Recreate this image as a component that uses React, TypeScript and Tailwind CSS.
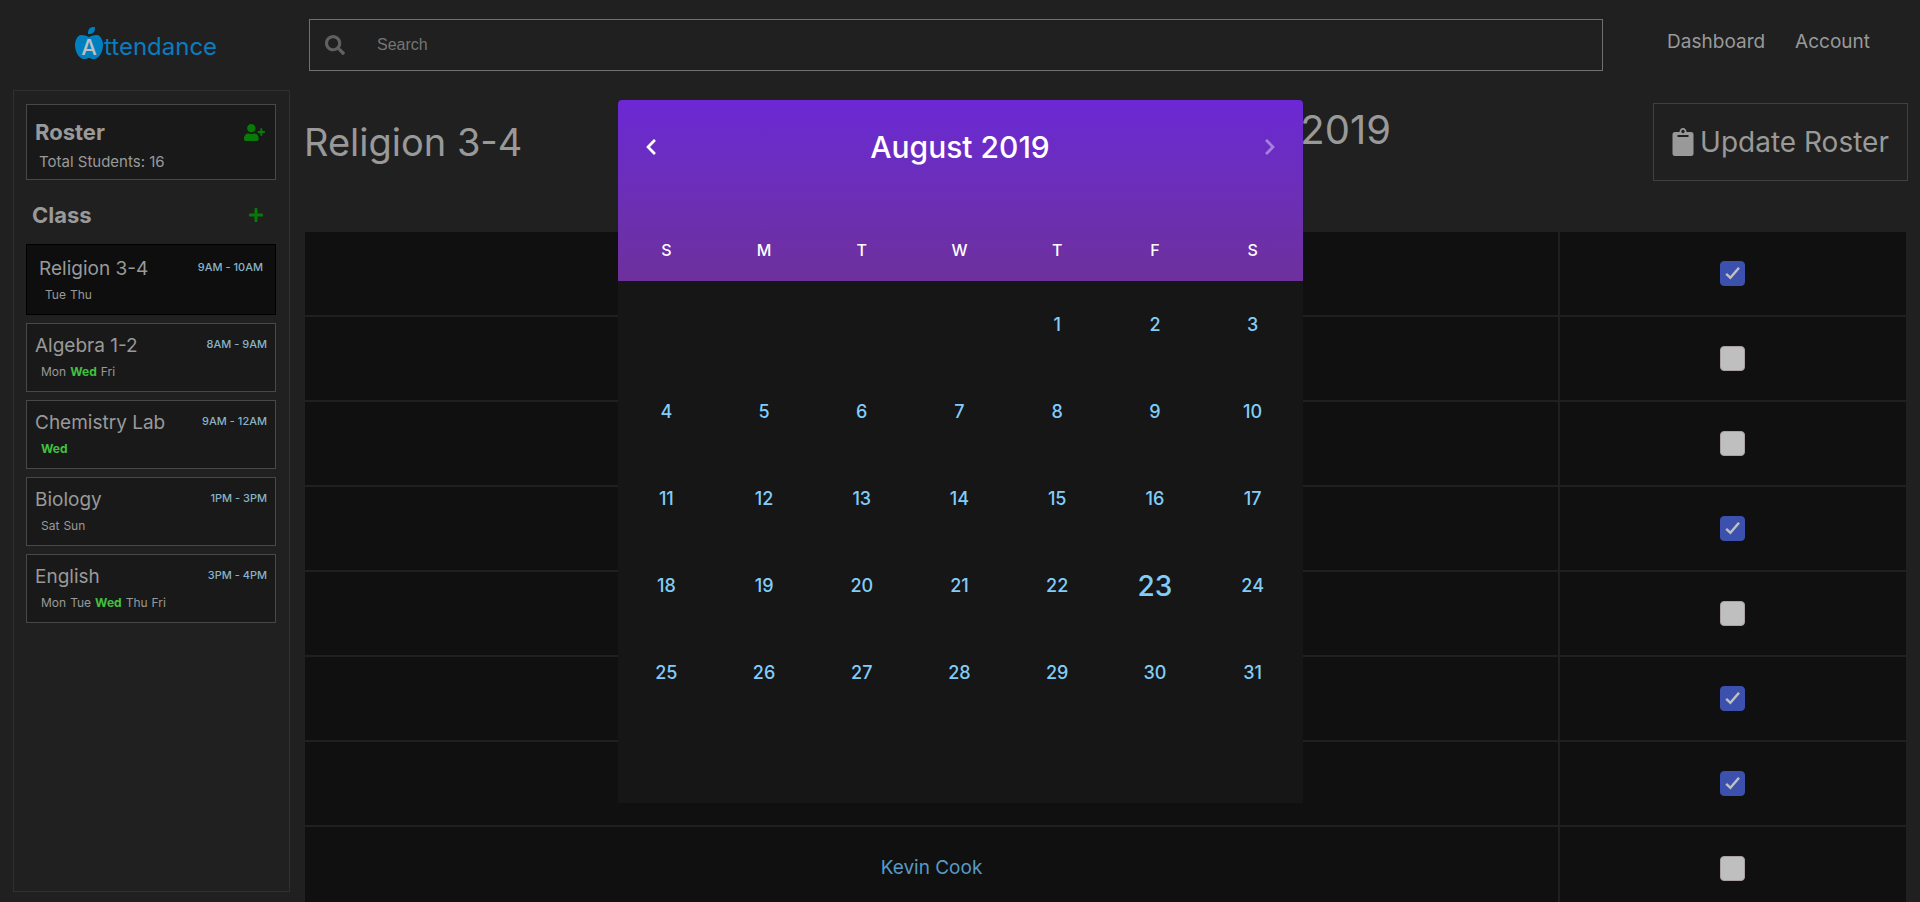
import { FaSearch, FaUserPlus, FaPlus, FaAppleAlt, FaChevronLeft, FaChevronRight } from "react-icons/fa";
import { useState } from "react";

type ClassItem = { name: string; time: string; days: string[]; active?: boolean };

const classes: ClassItem[] = [
  { name: "Religion 3-4", time: "9AM - 10AM", days: ["Tue", "Thu"], active: true },
  { name: "Algebra 1-2", time: "8AM - 9AM", days: ["Mon", "Wed", "Fri"] },
  { name: "Chemistry Lab", time: "9AM - 12AM", days: ["Wed"] },
  { name: "Biology", time: "1PM - 3PM", days: ["Sat", "Sun"] },
  { name: "English", time: "3PM - 4PM", days: ["Mon", "Tue", "Wed", "Thu", "Fri"] },
];

const today = "Wed";
const firstWeekday = 4;
const students = [
  { name: "", present: true },
  { name: "", present: false },
  { name: "", present: false },
  { name: "", present: true },
  { name: "", present: false },
  { name: "", present: true },
  { name: "", present: true },
  { name: "Kevin Cook", present: false },
];

function Logo() {
  return (
    <a href="#" className="flex items-end gap-px text-2xl leading-6 text-[#0a7cc0]">
      <span className="relative block h-8 w-7">
        <FaAppleAlt className="h-8 w-7 text-[#0080c0]" preserveAspectRatio="none" />
        <span className="absolute inset-x-0 bottom-0 text-center text-[22px] leading-6 font-medium text-[#c0c0c0]">A</span>
      </span>
      <span>ttendance</span>
    </a>
  );
}

function Header() {
  return (
    <header className="flex h-[90px] shrink-0 items-start">
      <div className="flex w-[309px] shrink-0 pl-[75px] pt-[27px]">
        <Logo />
      </div>
      <label className="mt-[19px] flex h-[52px] flex-1 items-center border border-[#707070] pl-[15px]">
        <FaSearch className="size-5 text-[#606060]" />
        <input
          type="search"
          placeholder="Search"
          aria-label="Search"
          className="ml-8 flex-1 bg-transparent font-['Liberation_Sans',sans-serif] text-base text-[#999] outline-none placeholder:text-[#757575]"
        />
      </label>
      <nav className="flex w-[317px] shrink-0 justify-end gap-[30px] pr-[50px] pt-7 text-[19px] leading-7 text-[#999]">
        <a href="#">Dashboard</a>
        <a href="#">Account</a>
      </nav>
    </header>
  );
}

function ClassCard({ item }: { item: ClassItem }) {
  return (
    <a
      href="#"
      className={
        item.active
          ? "block h-[71px] border border-black bg-[#0e0e0e] px-3 pt-3"
          : "block h-[69px] border border-[#484848] bg-[#191919] px-2 pt-2.5"
      }
    >
      <div className="flex justify-between">
        <span className="text-[19px] leading-6 text-[#999]">{item.name}</span>
        <span className="text-[11px] leading-5 font-medium text-[#86b4c8]">{item.time}</span>
      </div>
      <div className="flex gap-1 pl-1.5 text-xs leading-7 text-[#999]">
        {item.days.map((day) => (
          <span key={day} className={day === today ? "font-bold text-[#41c141]" : ""}>
            {day}
          </span>
        ))}
      </div>
    </a>
  );
}

function Sidebar() {
  return (
    <aside className="mb-2.5 ml-[13px] flex w-[277px] shrink-0 flex-col border border-[#303030] pt-[13px] pr-[13px] pl-3">
      <section className="h-[76px] border border-[#484848] bg-[#191919] pt-[15px] pr-2.5 pl-2">
        <div className="flex items-center justify-between">
          <h2 className="text-[22px] leading-6 font-bold text-[#999]">Roster</h2>
          <button type="button" aria-label="Add student">
            <FaUserPlus className="h-[17px] w-[21px] text-[#077a07]" />
          </button>
        </div>
        <p className="pl-1 pt-1 text-[15px] leading-7 text-[#999]">Total Students: 16</p>
      </section>
      <div className="flex h-16 items-center justify-between pt-1.5 pr-3 pl-1.5">
        <h2 className="text-[22px] leading-6 font-bold text-[#999]">Class</h2>
        <button type="button" aria-label="Add class">
          <FaPlus className="size-4 text-[#077a07]" />
        </button>
      </div>
      <nav className="flex flex-col gap-2">
        {classes.map((item) => (
          <ClassCard key={item.name} item={item} />
        ))}
      </nav>
    </aside>
  );
}

function Tick({ initial, label }: { initial: boolean; label: string }) {
  const [on, setOn] = useState(initial);
  return (
    <label className="grid size-[25px] place-items-center">
      <input
        type="checkbox"
        aria-label={label}
        checked={on}
        onChange={() => setOn(!on)}
        className="col-start-1 row-start-1 size-[25px] appearance-none rounded border border-[#a8a0a4] bg-[#bfbfbf] checked:border-[#3c50ae] checked:bg-[#3c50ae]"
      />
      {on && (
        <svg viewBox="0 0 25 25" className="pointer-events-none col-start-1 row-start-1 size-[25px]" fill="none" stroke="#c0c0c0" strokeWidth="2.5">
          <path d="M6.200 12.800 10.400 16.800 19 6.800" />
        </svg>
      )}
    </label>
  );
}

function Attendance() {
  return (
    <main className="flex min-w-0 flex-1 flex-col pr-3 pl-3.5">
      <div className="flex h-[142px] shrink-0 items-start">
        <h1 className="w-[320px] shrink-0 pt-7 text-[38px] leading-12 text-[#999]">Religion 3-4</h1>
        <p className="flex-1 pr-[262px] pt-4 text-right text-[40px] leading-12 text-[#999]">August 23, 2019</p>
        <button type="button" className="mt-[13px] flex h-[78px] w-[255px] shrink-0 items-center justify-center gap-1.5 border border-[#404040] text-[28px] text-[#999]">
          <svg viewBox="0 0 22 28" className="h-7 w-[22px]" fill="#999">
            <path
              fillRule="evenodd"
              d="M3 4h4.500C7.500 1.800 9 0 11 0s3.500 1.800 3.500 4H19a2.500 2.500 0 0 1 2.500 2.500v19A2.500 2.500 0 0 1 19 28H3a2.500 2.500 0 0 1-2.500-2.500v-19A2.500 2.500 0 0 1 3 4Zm8-2.200a1.700 1.700 0 1 0 0 3.400 1.700 1.700 0 0 0 0-3.400ZM5.500 7v2h11V7Z"
            />
          </svg>
          Update Roster
        </button>
      </div>
      <div className="min-h-0 flex-1 overflow-hidden pr-0.5 pl-px">
        <table className="w-full border-separate border-spacing-0">
          <tbody>
            {students.map((student, index) => (
              <tr key={index} className="h-[85px] bg-[#101010]">
                <td className="border-r-2 border-b-2 border-[#202020] text-center text-[19px] text-[#569ac6]">{student.name}</td>
                <td className="w-[346px] border-b-2 border-[#202020] pr-0.5">
                  <div className="flex justify-center">
                    <Tick initial={student.present} label={`Present ${index + 1}`} />
                  </div>
                </td>
              </tr>
            ))}
          </tbody>
        </table>
      </div>
    </main>
  );
}

function Calendar() {
  return (
    <div role="dialog" aria-label="Choose a date" className="w-[685px] overflow-hidden rounded-t bg-[#161616] font-medium">
      <div className="h-[181px] bg-linear-to-b from-[#6b28d4] to-[#6d309c] text-white">
        <div className="flex h-[94px] items-center justify-between px-[26px]">
          <button type="button" aria-label="Previous month">
            <FaChevronLeft className="h-[18px] w-3.5" />
          </button>
          <h2 className="text-3xl">August 2019</h2>
          <button type="button" aria-label="Next month" className="opacity-40">
            <FaChevronRight className="h-[18px] w-3.5" />
          </button>
        </div>
        <div className="grid grid-cols-7 pt-11 pr-px text-center text-base leading-6">
          {["S", "M", "T", "W", "T", "F", "S"].map((d, i) => (
            <span key={i}>{d}</span>
          ))}
        </div>
      </div>
      <div className="grid auto-rows-[87px] grid-cols-7 pr-px">
        {Array.from({ length: 42 }, (_, i) => {
          const day = i - firstWeekday + 1;
          if (day < 1 || day > 31) return <span key={i} />;
          return (
            <button key={i} type="button" className={day === 23 ? "text-[28px] text-[#81cdfa]" : "text-lg text-[#81cdfa]"}>
              {day}
            </button>
          );
        })}
      </div>
    </div>
  );
}

export default function App() {
  return (
    <div className="relative flex h-screen flex-col overflow-hidden bg-[#202020] font-['Inter',sans-serif]">
      <Header />
      <div className="flex min-h-0 flex-1">
        <Sidebar />
        <Attendance />
      </div>
      <div className="absolute inset-0 flex items-start justify-center pt-[100px]">
        <Calendar />
      </div>
    </div>
  );
}
